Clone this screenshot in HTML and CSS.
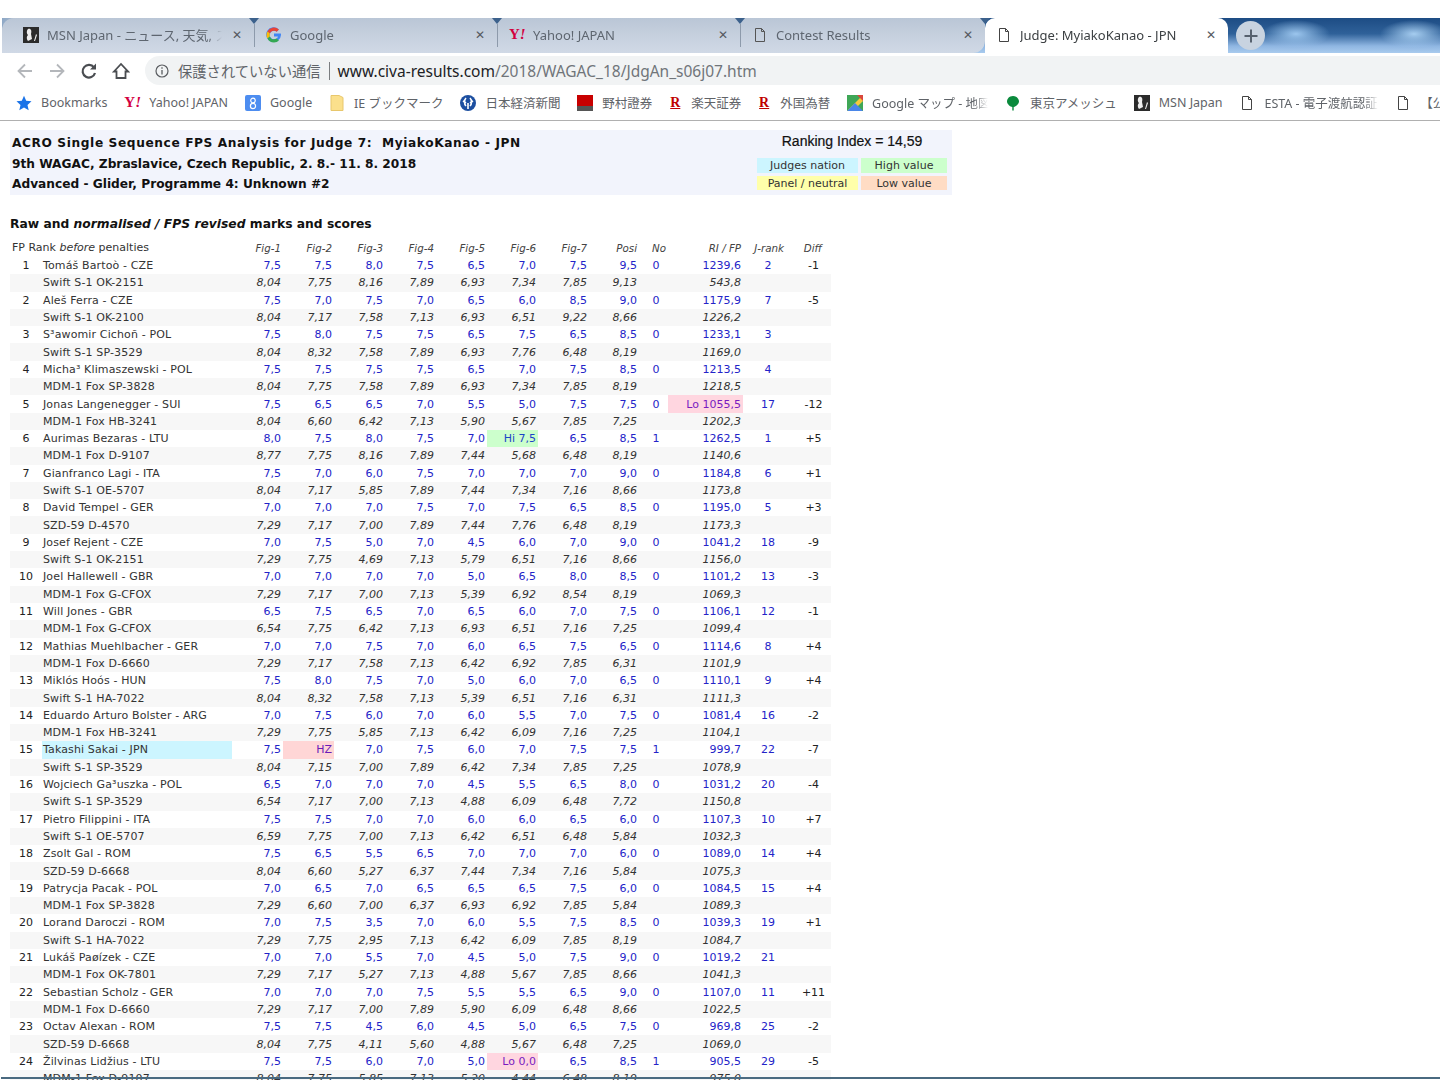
FILE: index.html
```html
<!DOCTYPE html>
<html lang="en">
<head>
  <meta charset="UTF-8" />
  <title>Judge: MyiakoKanao - JPN</title>
  <link rel="stylesheet" href="styles.css">
</head>
<body>

<div class="titlebar"></div>

<div class="tabstrip">
  <div class="tab first">
    <svg class="ico" viewBox="0 0 16 16"><rect width="16" height="16" fill="#2b2b2b"/><path d="M5 2c3-1 4 2 3 5l1 5-4 2c-2-3-1-5 0-6-2-2-1-5 0-6zM11 14l2-7 1 1-2 6z" fill="#eee"/></svg>
    <span class="tab-title">MSN Japan - ニュース, 天気, スポーツ</span>
    <span class="tab-x">✕</span>
  </div>
  <div class="tab">
    <svg class="ico" viewBox="0 0 16 16"><path d="M14.8 6.6H8v3h3.9c-.4 1.7-1.9 2.7-3.9 2.7a4.3 4.3 0 0 1 0-8.6c1 0 2 .4 2.7 1l2.2-2.2A7.4 7.4 0 1 0 15 8c0-.5 0-1-.2-1.4z" fill="#4285f4"/><path d="M1.4 4.6l2.5 1.9A4.3 4.3 0 0 1 8 3.7c1 0 2 .4 2.7 1l2.2-2.2A7.4 7.4 0 0 0 1.4 4.6z" fill="#ea4335"/><path d="M1.4 4.6a7.4 7.4 0 0 0 0 6.8l2.5-2a4.3 4.3 0 0 1 0-2.9z" fill="#fbbc05"/><path d="M1.4 11.4A7.4 7.4 0 0 0 8 15.4c1.9 0 3.7-.7 4.9-1.9l-2.4-1.9c-.7.5-1.5.7-2.5.7a4.3 4.3 0 0 1-4.1-2.9z" fill="#34a853"/></svg>
    <span class="tab-title">Google</span>
    <span class="tab-x">✕</span>
  </div>
  <div class="tab">
    <span class="yahoo">Y<i>!</i></span>
    <span class="tab-title">Yahoo! JAPAN</span>
    <span class="tab-x">✕</span>
  </div>
  <div class="tab last">
    <svg class="ico" viewBox="0 0 16 16"><path d="M3.5 1.5h6l3 3v10h-9zM9.500 1.500v3h3" fill="none" stroke="#555" stroke-width="1"/></svg>
    <span class="tab-title">Contest Results</span>
    <span class="tab-x">✕</span>
  </div>
  <div class="tab active">
    <svg class="ico" viewBox="0 0 16 16"><path d="M3.5 1.500h6l3 3v10h-9zM9.500 1.500v3h3" fill="none" stroke="#444" stroke-width="1"/></svg>
    <span class="tab-title">Judge: MyiakoKanao - JPN</span>
    <span class="tab-x">✕</span>
  </div>
  <div class="newtab">
    <svg viewBox="0 0 16 16" width="16" height="16"><path d="M8 1.500v13M1.500 8h13" stroke="#56616e" stroke-width="2" fill="none"/></svg>
  </div>
</div>

<div class="toolbar">
  <svg class="nav first-nav" viewBox="0 0 18 18"><path d="M16 9H3M9 2.500 2.500 9 9 15.500" fill="none" stroke="#b4b7bb" stroke-width="1.800"/></svg>
  <svg class="nav" viewBox="0 0 18 18"><path d="M2 9h13M9 2.500 15.500 9 9 15.500" fill="none" stroke="#b4b7bb" stroke-width="1.800"/></svg>
  <svg class="nav" viewBox="0 0 18 18"><path d="M14 5.500A6.300 6.300 0 1 0 15 11" fill="none" stroke="#4a4d51" stroke-width="2.200"/><path d="M16 1.500v6h-6z" fill="#4a4d51"/></svg>
  <svg class="nav" viewBox="0 0 18 18"><path d="M2 9.500 9 2l7 7.500h-2.500V16h-9V9.500z" fill="none" stroke="#4a4d51" stroke-width="1.800"/></svg>
  <div class="omnibox">
    <svg class="info" viewBox="0 0 14 14" width="14" height="14"><circle cx="7" cy="7" r="6" fill="none" stroke="#5a5d61" stroke-width="1.200"/><path d="M7 6v4.500M7 3.300v1.500" stroke="#5a5d61" stroke-width="1.300"/></svg>
    <span class="insecure">保護されていない通信</span>
    <span class="omni-sep"></span>
    <span class="url"><b>www.civa-results.com</b>/2018/WAGAC_18/JdgAn_s06j07.htm</span>
  </div>
</div>

<div class="bookmarks">
  <a class="bm"><svg class="ico" viewBox="0 0 16 16"><path d="M8 .8l2.200 4.900 5.300.6-4 3.600 1.200 5.300L8 12.500l-4.700 2.700 1.200-5.300-4-3.600 5.300-.6z" fill="#1a73e8"/></svg>Bookmarks</a>
  <a class="bm"><span class="yahoo">Y<i>!</i></span>Yahoo! JAPAN</a>
  <a class="bm"><svg class="ico" viewBox="0 0 16 16"><rect width="16" height="16" rx="2" fill="#4d8df0"/><circle cx="8" cy="5.500" r="2.300" fill="none" stroke="#fff" stroke-width="1.200"/><circle cx="8" cy="11" r="2.600" fill="none" stroke="#fff" stroke-width="1.200"/></svg>Google</a>
  <a class="bm"><svg class="ico" viewBox="0 0 14 16"><path d="M1 .5h8l4 2V15.500H1z" fill="#fbe08c" stroke="#e8c76c"/></svg>IE ブックマーク</a>
  <a class="bm"><svg class="ico" viewBox="0 0 16 16"><circle cx="8" cy="8" r="8" fill="#1d4fa0"/><path d="M6 3c-2 2-2 6 0 8M10 3c2 2 2 6 0 8M3 6l3 2M13 6l-3 2M8 8v6" stroke="#fff" stroke-width="1.600" fill="none"/></svg>日本経済新聞</a>
  <a class="bm"><svg class="ico" viewBox="0 0 16 16"><rect width="16" height="11" fill="#c80000"/><rect y="11" width="16" height="5" fill="#555"/></svg>野村證券</a>
  <a class="bm narrow"><span class="rakuten">R</span>楽天証券</a>
  <a class="bm narrow"><span class="rakuten">R</span>外国為替</a>
  <a class="bm"><svg class="ico" viewBox="0 0 16 16"><rect width="16" height="16" fill="#3fa757"/><path d="M0 16 16 0v6L6 16z" fill="#f6c93c"/><path d="M0 16 8 8l8 8z" fill="#4a86e8"/><path d="M10 0h6v6z" fill="#d9473c"/></svg><span class="fade w116">Google マップ - 地図</span></a>
  <a class="bm"><svg class="ico" viewBox="0 0 16 16"><path d="M8 1c4 0 6 3 6 5.500S10.500 12 8.700 12v3.500H7.300V12C5.500 12 2 9 2 6.500S4 1 8 1z" fill="#0a8a3c"/></svg>東京アメッシュ</a>
  <a class="bm"><svg class="ico" viewBox="0 0 16 16"><rect width="16" height="16" fill="#2b2b2b"/><path d="M5 2c3-1 4 2 3 5l1 5-4 2c-2-3-1-5 0-6-2-2-1-5 0-6zM11 14l2-7 1 1-2 6z" fill="#eee"/></svg>MSN Japan</a>
  <a class="bm"><svg class="ico" viewBox="0 0 16 16"><path d="M3.500 1.500h6l3 3v10h-9zM9.500 1.500v3h3" fill="none" stroke="#444"/></svg><span class="fade w114">ESTA - 電子渡航認証</span></a>
  <a class="bm"><svg class="ico" viewBox="0 0 16 16"><path d="M3.500 1.500h6l3 3v10h-9zM9.500 1.500v3h3" fill="none" stroke="#444"/></svg>【公</a>
</div>

<main class="page">
  <section class="panel">
    <div class="panel-title">
      <div class="wide">ACRO Single Sequence FPS Analysis for Judge 7:&nbsp; MyiakoKanao - JPN</div>
      <div>9th WAGAC, Zbraslavice, Czech Republic, 2. 8.- 11. 8. 2018</div>
      <div>Advanced - Glider, Programme 4: Unknown #2</div>
    </div>
    <div class="panel-side">
      <div class="ranking">Ranking Index = 14,59</div>
      <div class="legend">
        <span class="nation">Judges nation</span>
        <span class="high">High value</span>
        <span class="neutral">Panel / neutral</span>
        <span class="low">Low value</span>
      </div>
    </div>
  </section>

  <h3 class="marks-title">Raw and <i>normalised / FPS revised</i> marks and scores</h3>

  <table class="marks">
    <colgroup>
      <col class="c-rank"><col class="c-name">
      <col class="c-fig"><col class="c-fig"><col class="c-fig"><col class="c-fig"><col class="c-fig"><col class="c-fig"><col class="c-fig">
      <col class="c-posi"><col class="c-no"><col class="c-ri"><col class="c-jrank"><col class="c-diff">
    </colgroup>
    <thead>
      <tr><th colspan="2">FP Rank <i>before</i> penalties</th><th>Fig-1</th><th>Fig-2</th><th>Fig-3</th><th>Fig-4</th><th>Fig-5</th><th>Fig-6</th><th>Fig-7</th><th>Posi</th><th>No</th><th>RI / FP</th><th>J-rank</th><th>Diff</th></tr>
    </thead>
    <tbody>
      <tr><td>1<td>Tomáš Bartoò - CZE<td>7,5<td>7,5<td>8,0<td>7,5<td>6,5<td>7,0<td>7,5<td>9,5<td>0<td>1239,6<td>2<td>-1</tr>
      <tr><td><td>Swift S-1 OK-2151<td>8,04<td>7,75<td>8,16<td>7,89<td>6,93<td>7,34<td>7,85<td>9,13<td><td>543,8<td><td></tr>
      <tr><td>2<td>Aleš Ferra - CZE<td>7,5<td>7,0<td>7,5<td>7,0<td>6,5<td>6,0<td>8,5<td>9,0<td>0<td>1175,9<td>7<td>-5</tr>
      <tr><td><td>Swift S-1 OK-2100<td>8,04<td>7,17<td>7,58<td>7,13<td>6,93<td>6,51<td>9,22<td>8,66<td><td>1226,2<td><td></tr>
      <tr><td>3<td>S³awomir Cichoñ - POL<td>7,5<td>8,0<td>7,5<td>7,5<td>6,5<td>7,5<td>6,5<td>8,5<td>0<td>1233,1<td>3<td></tr>
      <tr><td><td>Swift S-1 SP-3529<td>8,04<td>8,32<td>7,58<td>7,89<td>6,93<td>7,76<td>6,48<td>8,19<td><td>1169,0<td><td></tr>
      <tr><td>4<td>Micha³ Klimaszewski - POL<td>7,5<td>7,5<td>7,5<td>7,5<td>6,5<td>7,0<td>7,5<td>8,5<td>0<td>1213,5<td>4<td></tr>
      <tr><td><td>MDM-1 Fox SP-3828<td>8,04<td>7,75<td>7,58<td>7,89<td>6,93<td>7,34<td>7,85<td>8,19<td><td>1218,5<td><td></tr>
      <tr><td>5<td>Jonas Langenegger - SUI<td>7,5<td>6,5<td>6,5<td>7,0<td>5,5<td>5,0<td>7,5<td>7,5<td>0<td class="lo">Lo 1055,5<td>17<td>-12</tr>
      <tr><td><td>MDM-1 Fox HB-3241<td>8,04<td>6,60<td>6,42<td>7,13<td>5,90<td>5,67<td>7,85<td>7,25<td><td>1202,3<td><td></tr>
      <tr><td>6<td>Aurimas Bezaras - LTU<td>8,0<td>7,5<td>8,0<td>7,5<td>7,0<td class="hi">Hi 7,5<td>6,5<td>8,5<td>1<td>1262,5<td>1<td>+5</tr>
      <tr><td><td>MDM-1 Fox D-9107<td>8,77<td>7,75<td>8,16<td>7,89<td>7,44<td>5,68<td>6,48<td>8,19<td><td>1140,6<td><td></tr>
      <tr><td>7<td>Gianfranco Lagi - ITA<td>7,5<td>7,0<td>6,0<td>7,5<td>7,0<td>7,0<td>7,0<td>9,0<td>0<td>1184,8<td>6<td>+1</tr>
      <tr><td><td>Swift S-1 OE-5707<td>8,04<td>7,17<td>5,85<td>7,89<td>7,44<td>7,34<td>7,16<td>8,66<td><td>1173,8<td><td></tr>
      <tr><td>8<td>David Tempel - GER<td>7,0<td>7,0<td>7,0<td>7,5<td>7,0<td>7,5<td>6,5<td>8,5<td>0<td>1195,0<td>5<td>+3</tr>
      <tr><td><td>SZD-59 D-4570<td>7,29<td>7,17<td>7,00<td>7,89<td>7,44<td>7,76<td>6,48<td>8,19<td><td>1173,3<td><td></tr>
      <tr><td>9<td>Josef Rejent - CZE<td>7,0<td>7,5<td>5,0<td>7,0<td>4,5<td>6,0<td>7,0<td>9,0<td>0<td>1041,2<td>18<td>-9</tr>
      <tr><td><td>Swift S-1 OK-2151<td>7,29<td>7,75<td>4,69<td>7,13<td>5,79<td>6,51<td>7,16<td>8,66<td><td>1156,0<td><td></tr>
      <tr><td>10<td>Joel Hallewell - GBR<td>7,0<td>7,0<td>7,0<td>7,0<td>5,0<td>6,5<td>8,0<td>8,5<td>0<td>1101,2<td>13<td>-3</tr>
      <tr><td><td>MDM-1 Fox G-CFOX<td>7,29<td>7,17<td>7,00<td>7,13<td>5,39<td>6,92<td>8,54<td>8,19<td><td>1069,3<td><td></tr>
      <tr><td>11<td>Will Jones - GBR<td>6,5<td>7,5<td>6,5<td>7,0<td>6,5<td>6,0<td>7,0<td>7,5<td>0<td>1106,1<td>12<td>-1</tr>
      <tr><td><td>MDM-1 Fox G-CFOX<td>6,54<td>7,75<td>6,42<td>7,13<td>6,93<td>6,51<td>7,16<td>7,25<td><td>1099,4<td><td></tr>
      <tr><td>12<td>Mathias Muehlbacher - GER<td>7,0<td>7,0<td>7,5<td>7,0<td>6,0<td>6,5<td>7,5<td>6,5<td>0<td>1114,6<td>8<td>+4</tr>
      <tr><td><td>MDM-1 Fox D-6660<td>7,29<td>7,17<td>7,58<td>7,13<td>6,42<td>6,92<td>7,85<td>6,31<td><td>1101,9<td><td></tr>
      <tr><td>13<td>Miklós Hoós - HUN<td>7,5<td>8,0<td>7,5<td>7,0<td>5,0<td>6,0<td>7,0<td>6,5<td>0<td>1110,1<td>9<td>+4</tr>
      <tr><td><td>Swift S-1 HA-7022<td>8,04<td>8,32<td>7,58<td>7,13<td>5,39<td>6,51<td>7,16<td>6,31<td><td>1111,3<td><td></tr>
      <tr><td>14<td>Eduardo Arturo Bolster - ARG<td>7,0<td>7,5<td>6,0<td>7,0<td>6,0<td>5,5<td>7,0<td>7,5<td>0<td>1081,4<td>16<td>-2</tr>
      <tr><td><td>MDM-1 Fox HB-3241<td>7,29<td>7,75<td>5,85<td>7,13<td>6,42<td>6,09<td>7,16<td>7,25<td><td>1104,1<td><td></tr>
      <tr><td>15<td class="own">Takashi Sakai - JPN<td>7,5<td class="hz">HZ<td>7,0<td>7,5<td>6,0<td>7,0<td>7,5<td>7,5<td>1<td>999,7<td>22<td>-7</tr>
      <tr><td><td>Swift S-1 SP-3529<td>8,04<td>7,15<td>7,00<td>7,89<td>6,42<td>7,34<td>7,85<td>7,25<td><td>1078,9<td><td></tr>
      <tr><td>16<td>Wojciech Ga³uszka - POL<td>6,5<td>7,0<td>7,0<td>7,0<td>4,5<td>5,5<td>6,5<td>8,0<td>0<td>1031,2<td>20<td>-4</tr>
      <tr><td><td>Swift S-1 SP-3529<td>6,54<td>7,17<td>7,00<td>7,13<td>4,88<td>6,09<td>6,48<td>7,72<td><td>1150,8<td><td></tr>
      <tr><td>17<td>Pietro Filippini - ITA<td>7,5<td>7,5<td>7,0<td>7,0<td>6,0<td>6,0<td>6,5<td>6,0<td>0<td>1107,3<td>10<td>+7</tr>
      <tr><td><td>Swift S-1 OE-5707<td>6,59<td>7,75<td>7,00<td>7,13<td>6,42<td>6,51<td>6,48<td>5,84<td><td>1032,3<td><td></tr>
      <tr><td>18<td>Zsolt Gal - ROM<td>7,5<td>6,5<td>5,5<td>6,5<td>7,0<td>7,0<td>7,0<td>6,0<td>0<td>1089,0<td>14<td>+4</tr>
      <tr><td><td>SZD-59 D-6668<td>8,04<td>6,60<td>5,27<td>6,37<td>7,44<td>7,34<td>7,16<td>5,84<td><td>1075,3<td><td></tr>
      <tr><td>19<td>Patrycja Pacak - POL<td>7,0<td>6,5<td>7,0<td>6,5<td>6,5<td>6,5<td>7,5<td>6,0<td>0<td>1084,5<td>15<td>+4</tr>
      <tr><td><td>MDM-1 Fox SP-3828<td>7,29<td>6,60<td>7,00<td>6,37<td>6,93<td>6,92<td>7,85<td>5,84<td><td>1089,3<td><td></tr>
      <tr><td>20<td>Lorand Daroczi - ROM<td>7,0<td>7,5<td>3,5<td>7,0<td>6,0<td>5,5<td>7,5<td>8,5<td>0<td>1039,3<td>19<td>+1</tr>
      <tr><td><td>Swift S-1 HA-7022<td>7,29<td>7,75<td>2,95<td>7,13<td>6,42<td>6,09<td>7,85<td>8,19<td><td>1084,7<td><td></tr>
      <tr><td>21<td>Lukáš Paøízek - CZE<td>7,0<td>7,0<td>5,5<td>7,0<td>4,5<td>5,0<td>7,5<td>9,0<td>0<td>1019,2<td>21<td></tr>
      <tr><td><td>MDM-1 Fox OK-7801<td>7,29<td>7,17<td>5,27<td>7,13<td>4,88<td>5,67<td>7,85<td>8,66<td><td>1041,3<td><td></tr>
      <tr><td>22<td>Sebastian Scholz - GER<td>7,0<td>7,0<td>7,0<td>7,5<td>5,5<td>5,5<td>6,5<td>9,0<td>0<td>1107,0<td>11<td>+11</tr>
      <tr><td><td>MDM-1 Fox D-6660<td>7,29<td>7,17<td>7,00<td>7,89<td>5,90<td>6,09<td>6,48<td>8,66<td><td>1022,5<td><td></tr>
      <tr><td>23<td>Octav Alexan - ROM<td>7,5<td>7,5<td>4,5<td>6,0<td>4,5<td>5,0<td>6,5<td>7,5<td>0<td>969,8<td>25<td>-2</tr>
      <tr><td><td>SZD-59 D-6668<td>8,04<td>7,75<td>4,11<td>5,60<td>4,88<td>5,67<td>6,48<td>7,25<td><td>1069,0<td><td></tr>
      <tr><td>24<td>Žilvinas Lidžius - LTU<td>7,5<td>7,5<td>6,0<td>7,0<td>5,0<td class="lo">Lo 0,0<td>6,5<td>8,5<td>1<td>905,5<td>29<td>-5</tr>
      <tr><td><td>MDM-1 Fox D-9107<td>8,04<td>7,75<td>5,85<td>7,13<td>5,20<td>4,44<td>6,48<td>8,19<td><td>975,0<td><td></tr>
    </tbody>
  </table>
</main>

<div class="window-edge"></div>

</body>
</html>
```

FILE: styles.css
```css
html, body { margin: 0; padding: 0; height: 1080px; overflow: hidden; background: #fff; }
body { font-family: "DejaVu Sans", Verdana, sans-serif; color: #111; }

/* browser chrome */
.titlebar { height: 18px; background: #fff; }
.tabstrip {
  height: 35px; margin-left: 2px; display: flex; position: relative;
  background:
    linear-gradient(to right, #8ea8c6 0, #a9bace 16px, transparent 16px),
    radial-gradient(ellipse 34px 14px at 1294px 16px, #9cc6ee 0, rgba(156,198,238,0) 100%),
    radial-gradient(ellipse 34px 14px at 1412px 16px, #a6cdf0 0, rgba(166,205,240,0) 100%),
    linear-gradient(#1d4c84 0, #2f6199 45%, #8fb6e2 80%, #a9cbee 100%);
}
.tab {
  width: 243px; box-sizing: border-box; padding: 0 10px 2px 12px; display: flex; align-items: center; gap: 8px;
  position: relative; background: linear-gradient(#bac6d6, #c6d0de 50%, #d0d9e6);
  font: 13px "Noto Sans", "Noto Sans CJK JP", sans-serif; color: #5e6670;
}
.tab.first { width: 252px; padding-left: 21px; border-radius: 12px 0 0 0; }
.tab + .tab::before { content: ""; position: absolute; left: 0; top: 6px; bottom: 6px; width: 1px; background: #8d9aab; }
.tab + .tab::after { content: ""; position: absolute; left: -5px; top: 0; border: 5px solid transparent; border-top: 6px solid #3c618c; border-bottom: 0; }
.tab.last { width: 245px; border-radius: 0 0 12px 0; }
.tab.active { background: #fff; color: #3c4043; border-radius: 10px 10px 0 0; padding-left: 11px; }
.tab.active::before { display: none; }
.tab-title { flex: 1; min-width: 0; white-space: nowrap; overflow: hidden; -webkit-mask-image: linear-gradient(to left, transparent 0, #000 14px); mask-image: linear-gradient(to left, transparent 0, #000 14px); }
.tab-x { flex: none; font-size: 12px; color: #55595e; width: 14px; text-align: center; }
.ico { width: 16px; height: 16px; flex: none; }
.yahoo { font: bold 15px "Liberation Serif", serif; color: #d3003f; width: 16px; flex: none; text-align: center; white-space: nowrap; }
.newtab { width: 29px; height: 29px; margin: 3px 0 0 8px; border-radius: 50%; background: #c8d3e0; display: flex; align-items: center; justify-content: center; }

.toolbar { height: 35px; background: #fff; display: flex; align-items: center; }
.nav { width: 18px; height: 18px; margin-left: 14px; flex: none; }
.first-nav { margin-left: 16px; }
.omnibox {
  flex: 1; height: 29px; margin: 0 0 0 15px; background: #f1f3f4; border-radius: 15px 0 0 15px;
  display: flex; align-items: center; padding-left: 10px;
  font: 14.300px "Noto Sans", "Noto Sans CJK JP", sans-serif; color: #70757a;
}
.info { flex: none; margin-right: 9px; }
.insecure { color: #5f6368; }
.omni-sep { width: 1px; height: 18px; background: #7a7d80; margin: 0 8px; }
.url { white-space: nowrap; font-size: 15.500px; }
.url b { font-weight: normal; color: #202124; }

.bookmarks {
  height: 33px; padding: 0 0 3px 16px; border-bottom: 1px solid #b0b0b0; box-sizing: border-box; display: flex; align-items: center; gap: 16.900px;
  white-space: nowrap; overflow: hidden;
  font: 12.500px "Noto Sans", "Noto Sans CJK JP", sans-serif; color: #5f6368;
}
.bm { display: flex; align-items: center; gap: 9px; }
.narrow { gap: 10px; }
.rakuten { font: bold 14px "Liberation Serif", serif; color: #bf0000; text-decoration: underline; width: 12px; text-align: center; }
.fade { display: block; overflow: hidden; -webkit-mask-image: linear-gradient(to left, transparent 0, #000 14px); mask-image: linear-gradient(to left, transparent 0, #000 14px); }
.w116 { width: 116px; }
.w114 { width: 114px; }

/* page */
.page { padding: 9px 0 0 10px; }
.panel { width: 942px; height: 65px; background: #f2f4fc; display: flex; justify-content: space-between; box-sizing: border-box; }
.panel-title { padding: 3px 0 0 2px; font-size: 12.200px; font-weight: bold; line-height: 20.500px; }
.panel-title .wide { letter-spacing: .6px; }
.panel-side { width: 190px; margin-right: 5px; }
.ranking { text-align: center; font: 14px/22px "Liberation Sans", sans-serif; height: 28px; -webkit-text-stroke: .2px #111; }
.legend { display: grid; grid-template-columns: 101px 86px; column-gap: 3px; row-gap: 3px; font-size: 11px; }
.legend span { height: 14.500px; line-height: 15px; text-align: center; color: #333; }
.nation { background: #ccf5ff; }
.high { background: #ccffcc; }
.neutral { background: #ffffaa; }
.low { background: #ffdcc4; }

.marks-title { margin: 20px 0 0; font-size: 12.300px; line-height: 18px; font-weight: bold; }

.marks { border-collapse: collapse; table-layout: fixed; width: 821px; margin-top: 5px; font-size: 11px; }
.c-rank { width: 32px; }
.c-name { width: 190px; }
.c-fig { width: 51px; }
.c-posi { width: 50px; }
.c-no { width: 29px; }
.c-ri { width: 75px; }
.c-jrank { width: 43px; }
.c-diff { width: 45px; }

.marks th { height: 18px; padding: 0 2px; font-weight: normal; font-style: italic; text-align: right; color: #444; font-size: 10.300px; white-space: nowrap; }
.marks th:first-child { text-align: left; font-style: normal; padding-left: 2px; font-size: 11px; color: #333; }
.marks thead tr { height: 19px; }
.marks th:last-child { padding-right: 9px; }

.marks td { height: 17.310px; padding: 0 2px; text-align: right; white-space: nowrap; color: #2323c8; overflow: hidden; }
.marks td:nth-child(1) { text-align: center; color: #222; padding: 0; }
.marks td:nth-child(2) { text-align: left; color: #333; padding: 0 0 0 1px; letter-spacing: .13px; }
.marks td:nth-child(11) { text-align: center; padding: 0 0 0 5px; }
.marks td:nth-child(13) { text-align: center; padding: 0 0 0 7px; color: #2323c8; }
.marks td:nth-child(14) { text-align: center; padding: 0 0 0 10px; color: #222; }

.marks tbody tr:nth-child(even) td { background: #f7f7f7; font-style: italic; color: #333; }
.marks tbody tr:nth-child(even) td:nth-child(2) { font-style: normal; }

.marks td.own { background: #ccf5ff; }
.marks td.hz { background: #ffd6d6; color: #6a1bb8; }
.marks td.lo { background: #ffd6e0; color: #7a1bc0; }
.marks td.hi { background: #ccffcc; color: #1a44c8; }

.window-edge { position: fixed; left: 1px; right: 0; top: 1077px; height: 2px; background: #4a6a80; }
```
